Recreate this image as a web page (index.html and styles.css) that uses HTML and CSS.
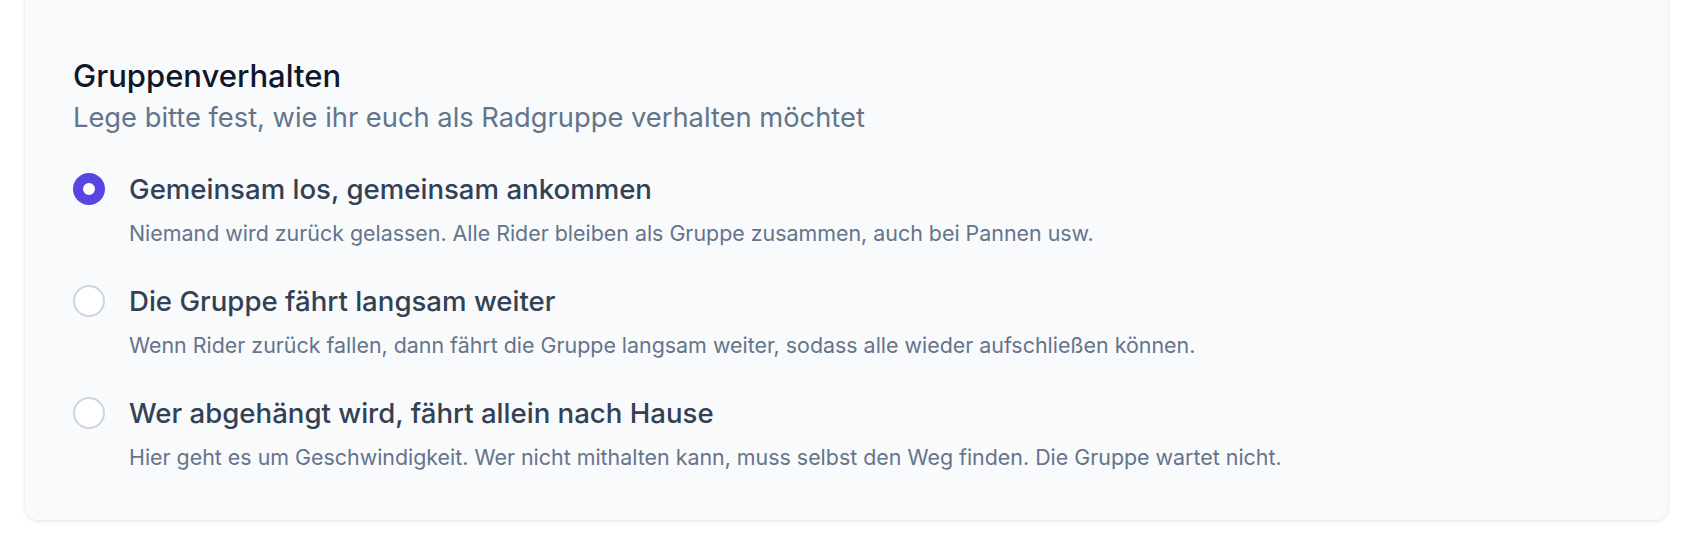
FILE: index.html
```html
<!DOCTYPE html>
<html lang="de">
<head>
    <meta charset="UTF-8">
    <meta name="viewport" content="width=device-width, initial-scale=1.0">
    <title>Gruppenverhalten</title>
    <link rel="stylesheet" href="styles.css">
</head>
<body>

<div class="page">
    <fieldset class="card">
        <legend class="card-title">Gruppenverhalten</legend>
        <p class="card-sub">Lege bitte fest, wie ihr euch als Radgruppe verhalten möchtet</p>

        <div class="options">
            <label class="option">
                <input type="radio" name="verhalten" value="zusammen" checked>
                <span class="option-text">
                    <span class="option-label">Gemeinsam los, gemeinsam ankommen</span>
                    <span class="option-desc">Niemand wird zurück gelassen. Alle Rider bleiben als Gruppe zusammen, auch bei Pannen usw.</span>
                </span>
            </label>

            <label class="option">
                <input type="radio" name="verhalten" value="langsam">
                <span class="option-text">
                    <span class="option-label">Die Gruppe fährt langsam weiter</span>
                    <span class="option-desc">Wenn Rider zurück fallen, dann fährt die Gruppe langsam weiter, sodass alle wieder aufschließen können.</span>
                </span>
            </label>

            <label class="option">
                <input type="radio" name="verhalten" value="allein">
                <span class="option-text">
                    <span class="option-label">Wer abgehängt wird, fährt allein nach Hause</span>
                    <span class="option-desc">Hier geht es um Geschwindigkeit. Wer nicht mithalten kann, muss selbst den Weg finden. Die Gruppe wartet nicht.</span>
                </span>
            </label>
        </div>
    </fieldset>
</div>

</body>
</html>
```

FILE: styles.css
```css
body { margin: 0; background: #fff; font-family: Inter, "Noto Sans", sans-serif; overflow: hidden; }
.page { padding: 0 26px 26px 25px; }

.card { margin: -20px 0 0; padding: 76px 50px 47px 48px; border: 0; min-width: 0;
        background: #f8fafc; border-radius: 14px;
        box-shadow: 0 2px 4px rgba(15, 23, 42, 0.08), 0 0 0 1px rgba(15, 23, 42, 0.03); }
.card-title { float: left; width: 100%; padding: 0; margin: 0;
              font-size: 31px; line-height: 40px; font-weight: 500; color: #0f172a; }
.card-sub { clear: both; margin: 0; padding-top: 4px;
            font-size: 27.3px; line-height: 36px; color: #64748b; }

.options { display: flex; flex-direction: column; gap: 34px; margin-top: 35px; }
.option { display: flex; align-items: flex-start; gap: 24px; cursor: pointer; }
.option input { appearance: none; -webkit-appearance: none; flex: none; margin: 2px 0 0;
                width: 32px; height: 32px; border-radius: 50%;
                border: 2px solid #cbd5e1; background: #fff; }
.option input:checked { border: 10px solid #5846e3; }
.option-text { display: flex; flex-direction: column; gap: 10px; }
.option-label { font-size: 27.6px; line-height: 36px; font-weight: 500; color: #334155; }
.option-desc { font-size: 21.4px; line-height: 32px; color: #64748b; }
```
